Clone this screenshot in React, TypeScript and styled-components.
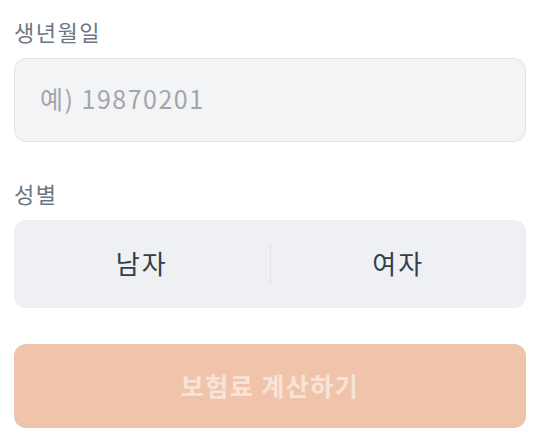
import styled, { createGlobalStyle } from "styled-components";

const GlobalStyle = createGlobalStyle`
  html, body {
    margin: 0;
    padding: 0;
    background: #fff;
    font-family: "Noto Sans CJK KR", "Noto Sans", sans-serif;
  }
  * { box-sizing: border-box; }
`;

const Form = styled.form`
  width: 512px;
  margin-left: 14px;
  padding-top: 17px;
  display: flex;
  flex-direction: column;
`;

const Field = styled.div<{ $gapAfter: number }>`
  display: flex;
  flex-direction: column;
  gap: 13px;
  margin-bottom: ${p => p.$gapAfter}px;
`;

const Label = styled.label`
  font-size: 22px;
  line-height: 28px;
  font-weight: 400;
  letter-spacing: 1.5px;
  color: #6b7684;
`;

const Input = styled.input`
  height: 84px;
  width: 100%;
  border: 1px solid #e3e5e9;
  border-radius: 12px;
  background: #f3f4f6;
  padding: 0 25px 4px;
  font-family: inherit;
  font-size: 25px;
  letter-spacing: 1.5px;
  color: #333d4b;
  outline: none;

  &::placeholder {
    color: #a3a5ad;
  }
`;

const Segment = styled.div`
  height: 88px;
  border-radius: 12px;
  background: #eff0f4;
  display: flex;
  align-items: center;
`;

const SegmentButton = styled.button`
  flex: 1;
  height: 100%;
  padding: 0 0 4px;
  border: none;
  background: transparent;
  font-family: inherit;
  font-size: 26px;
  letter-spacing: 2px;
  color: #333d4b;
  cursor: pointer;
`;

const Divider = styled.span`
  width: 1px;
  height: 40px;
  background: #dfe1e5;
`;

const Submit = styled.button`
  height: 84px;
  padding: 0 0 2px;
  border: none;
  border-radius: 12px;
  background: #f0c4ab;
  color: #f9e3d8;
  font-family: inherit;
  font-size: 25px;
  font-weight: 700;
  letter-spacing: 1.5px;
`;

export default function App() {
  return (
    <>
      <GlobalStyle />
      <Form onSubmit={e => e.preventDefault()}>
        <Field $gapAfter={37}>
          <Label>생년월일</Label>
          <Input placeholder="예) 19870201" />
        </Field>
        <Field $gapAfter={36}>
          <Label>성별</Label>
          <Segment>
            <SegmentButton type="button">남자</SegmentButton>
            <Divider />
            <SegmentButton type="button">여자</SegmentButton>
          </Segment>
        </Field>
        <Submit type="submit" disabled>보험료 계산하기</Submit>
      </Form>
    </>
  );
}
